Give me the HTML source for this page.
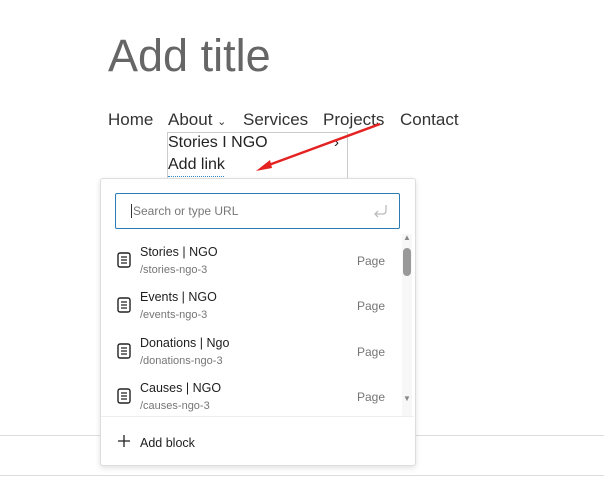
<!DOCTYPE html>
<html><head><style>
body{margin:0;width:604px;height:478px;background:#fff;position:relative;overflow:hidden;font-family:"Liberation Sans",sans-serif;}
.a{position:absolute;white-space:nowrap}
.nav{font-size:17px;color:#333;top:110px}
.pop{position:absolute;left:100px;top:178px;width:314px;height:286px;background:#fff;border:1px solid #ddd;border-radius:3px;box-shadow:0 2px 6px rgba(0,0,0,.12)}
.t{font-size:12.5px;color:#1e1e1e}
.s{font-size:11px;color:#757575}
.pg{font-size:12px;color:#757575}
</style></head><body>
<div class="a" style="left:108px;top:30px;font-size:45px;color:#666">Add title</div>
<div class="a nav" style="left:108px">Home</div>
<div class="a nav" style="left:168px">About <span style="font-size:11px">&#8964;</span></div>
<div class="a nav" style="left:243px">Services</div>
<div class="a nav" style="left:323px">Projects</div>
<div class="a nav" style="left:400px">Contact</div>
<div class="a" style="left:167px;top:132px;width:179px;height:48px;border:1px solid #ccc;border-bottom:none"></div>
<div class="a" style="left:168px;top:134px;font-size:16px;color:#222">Stories I NGO</div>
<div class="a" style="left:334px;top:134px;font-size:15px;color:#222">&#8250;</div>
<div class="a" style="left:168px;top:156px;font-size:16px;color:#222">Add link</div>
<div class="a" style="left:168px;top:176px;width:56px;border-top:1px dotted #3a8bc8"></div>
<div class="a" style="left:0;top:435px;width:604px;border-top:1px solid #ddd"></div>
<div class="a" style="left:0;top:475px;width:604px;border-top:1px solid #ddd"></div>
<div class="pop"></div>
<div class="a" style="left:115px;top:193px;width:283px;height:34px;border:1.5px solid #2b7bb5;border-radius:2px"></div>
<div class="a" style="left:131px;top:204px;font-size:12px;color:#777;border-left:1px solid #333;padding-left:1px;line-height:14px">Search or type URL</div>
<svg class="a" style="left:372px;top:203px" width="18" height="16" viewBox="0 0 18 16"><path d="M14 2v6a3 3 0 0 1-3 3H3M6 8l-3 3 3 3" fill="none" stroke="#bbb" stroke-width="1.3"/></svg>
<div class="a" style="left:402px;top:234px;width:10px;height:182px;background:#f7f7f7"></div>
<div class="a" style="left:403px;top:248px;width:8px;height:28px;background:#999;border-radius:4px"></div>
<div class="a" style="left:403px;top:233px;font-size:8px;color:#888">&#9650;</div>
<div class="a" style="left:403px;top:394px;font-size:8px;color:#888">&#9660;</div>
<div class="a" style="left:101px;top:416px;width:313px;border-top:1px solid #eee"></div>
<svg class="a" style="left:118px;top:435px" width="12" height="12" viewBox="0 0 12 12"><path d="M6 0v12M0 6h12" stroke="#222" stroke-width="1.3"/></svg>
<div class="a t" style="left:140px;top:436px">Add block</div>
<div class="a" style="left:0;top:243px">
 <svg class="a" style="left:117px;top:9px" width="14" height="16" viewBox="0 0 14 16"><rect x="1" y="1" width="12" height="14" rx="2" fill="none" stroke="#222" stroke-width="1.4"/><path d="M4 5h6M4 8h6M4 11h6" stroke="#222" stroke-width="1.3"/></svg>
 <div class="a t" style="left:140px;top:2px">Stories | NGO</div><div class="a s" style="left:140px;top:21px">/stories-ngo-3</div><div class="a pg" style="left:357px;top:11px">Page</div></div>
<div class="a" style="left:0;top:288px">
 <svg class="a" style="left:117px;top:9px" width="14" height="16" viewBox="0 0 14 16"><rect x="1" y="1" width="12" height="14" rx="2" fill="none" stroke="#222" stroke-width="1.4"/><path d="M4 5h6M4 8h6M4 11h6" stroke="#222" stroke-width="1.3"/></svg>
 <div class="a t" style="left:140px;top:2px">Events | NGO</div><div class="a s" style="left:140px;top:21px">/events-ngo-3</div><div class="a pg" style="left:357px;top:11px">Page</div></div>
<div class="a" style="left:0;top:334px">
 <svg class="a" style="left:117px;top:9px" width="14" height="16" viewBox="0 0 14 16"><rect x="1" y="1" width="12" height="14" rx="2" fill="none" stroke="#222" stroke-width="1.4"/><path d="M4 5h6M4 8h6M4 11h6" stroke="#222" stroke-width="1.3"/></svg>
 <div class="a t" style="left:140px;top:2px">Donations | Ngo</div><div class="a s" style="left:140px;top:21px">/donations-ngo-3</div><div class="a pg" style="left:357px;top:11px">Page</div></div>
<div class="a" style="left:0;top:379px">
 <svg class="a" style="left:117px;top:9px" width="14" height="16" viewBox="0 0 14 16"><rect x="1" y="1" width="12" height="14" rx="2" fill="none" stroke="#222" stroke-width="1.4"/><path d="M4 5h6M4 8h6M4 11h6" stroke="#222" stroke-width="1.3"/></svg>
 <div class="a t" style="left:140px;top:2px">Causes | NGO</div><div class="a s" style="left:140px;top:21px">/causes-ngo-3</div><div class="a pg" style="left:357px;top:11px">Page</div></div>
<svg class="a" style="left:0;top:0" width="604" height="478"><line x1="380" y1="124" x2="266" y2="166" stroke="#e52222" stroke-width="2.5"/><path d="M256 171l14-11 2 8z" fill="#e52222"/></svg>
</body></html>
